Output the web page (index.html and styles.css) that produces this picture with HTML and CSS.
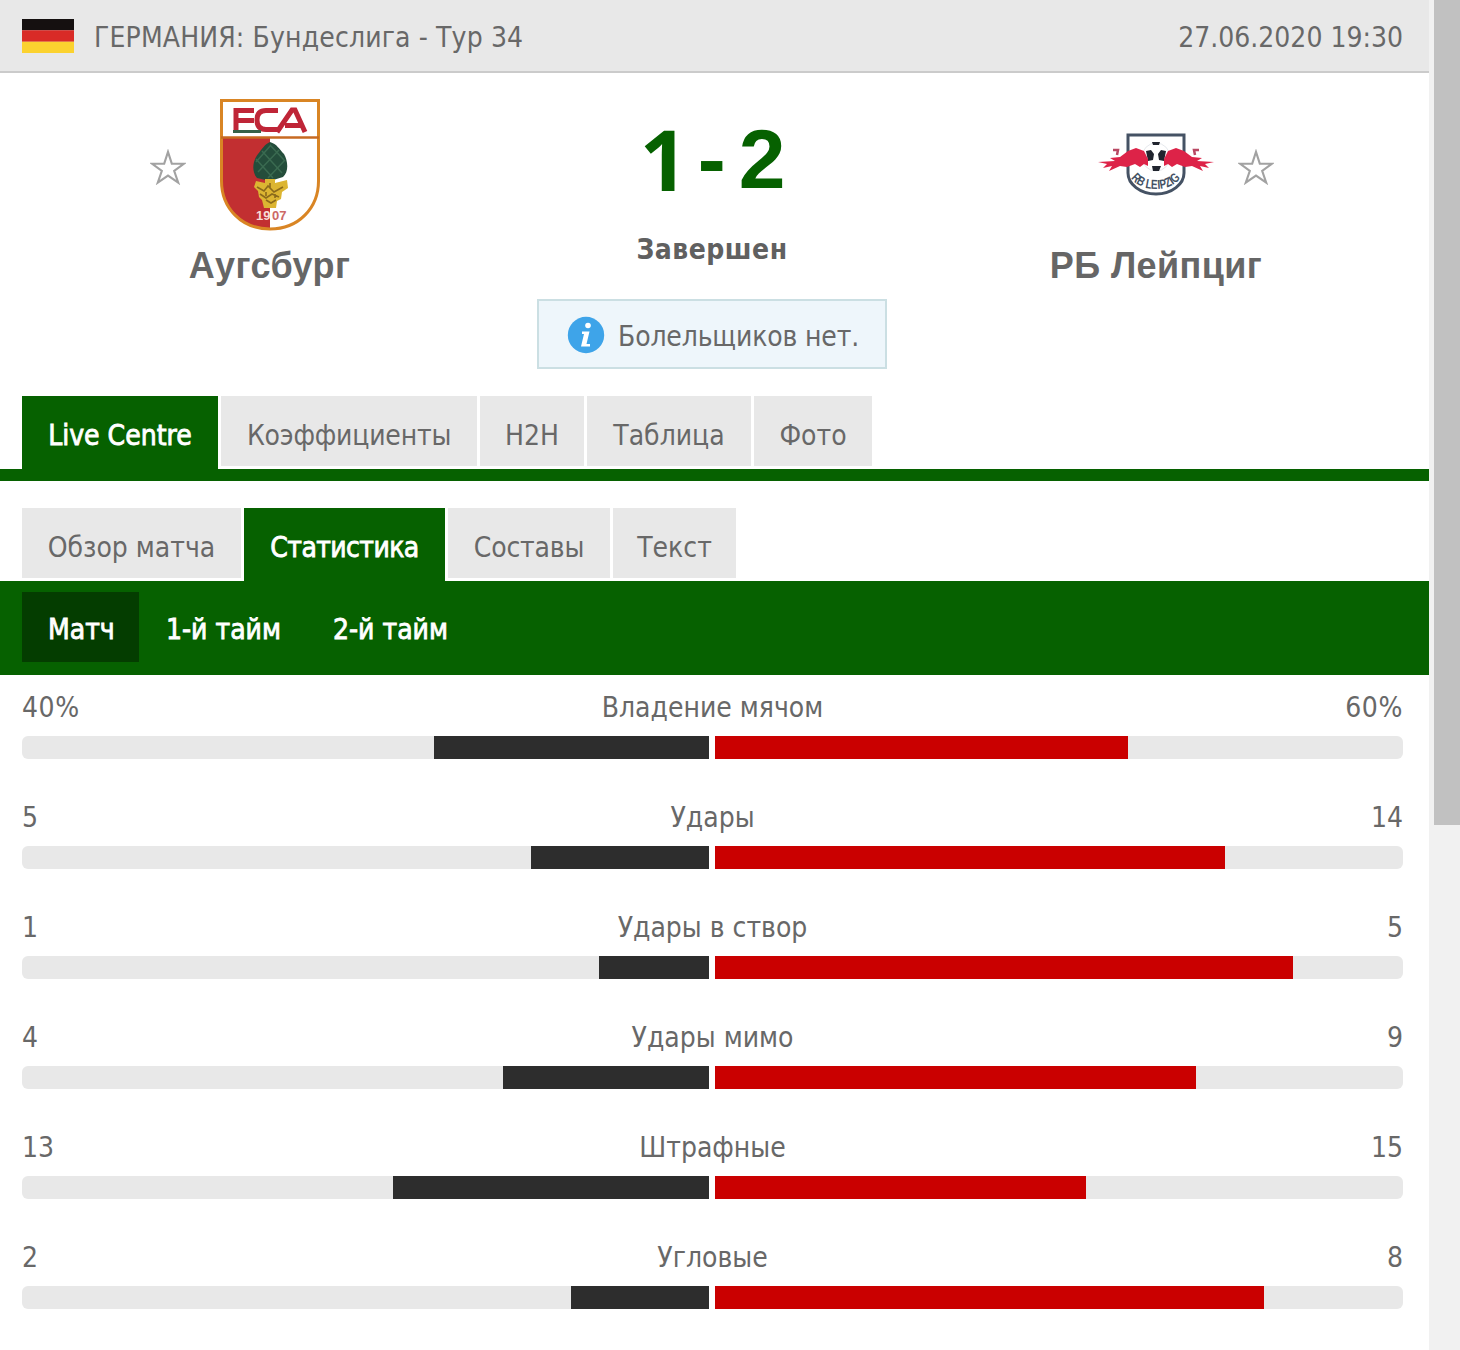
FILE: index.html
```html
<!DOCTYPE html>
<html lang="ru">
<head>
<meta charset="utf-8">
<title>Аугсбург - РБ Лейпциг</title>
<link rel="stylesheet" href="styles.css">
</head>
<body>
<div class="window">
<main class="page">
  <header class="top">
    <svg class="flag" viewBox="0 0 52 36" preserveAspectRatio="none"><path fill="#151010" d="M0 0h52v12H0z"/><path fill="#d92b27" d="M0 12h52v12H0z"/><path fill="#fbd22f" d="M0 24h52v12H0z"/></svg>
    <span class="league">ГЕРМАНИЯ: Бундеслига - Тур 34</span>
    <time class="date">27.06.2020 19:30</time>
  </header>

  <section class="match">
    <div class="team home">
      <div class="crest-row">
        <svg class="star" viewBox="0 0 38 38"><path d="M19 3l4 12.500h13l-10.500 7.600 4.300 12.400L19 28 8.200 35.500l4.300-12.400L2 15.500h13z"/></svg>
        <svg class="fca" viewBox="0 0 100 132">
          <path d="M1.500 1.500h97V82c0 27-20 48-48.500 48S1.500 109 1.500 82z" fill="#fff"/>
          <path d="M2 39h48v91C21 129 2 109 2 82z" fill="#c22f31"/>
          <path d="M1.500 1.500h97V82c0 27-20 48-48.500 48S1.500 109 1.500 82z" fill="none" stroke="#d98524" stroke-width="3"/>
          <path d="M1 38.500h98" stroke="#c76a22" stroke-width="2.500"/>
          <g fill="none" stroke="#bf2537" stroke-width="5"><path d="M34 11.500H16V32M16 21.500h18"/><path d="M58 11.500H46q-9 0-9 9.500t9 9.500h12"/><path d="M57 33l15-22h3l10 22M65 26.500h17"/></g>
          <path d="M13 31h28v3H13z" fill="#356148"/>
          <path d="M50 43c7 2 9 7 14 12 4 7 5 18-1 23l-13 4-13-3c-6-7-4-18 1-24 4-5 7-10 12-12z" fill="#244d3b"/>
          <path d="M42 52l20 22M36 60l17 19M50 46l14 15M59 51L38 73M65 61L48 79M51 46L36 63" stroke="#3a6a50" stroke-width="1.500"/>
          <path d="M45 80h10v4l12-3 1 8-6 4-1 7-4 2-1 7H44l-2-8-3-3-1-6-4-4 2-6 9 2z" fill="#dcb532"/>
          <path d="M37 88l7 4 4-5 6 6 9-5M40 95l6 4 6-4 7 3M46 101l5 3 5-3M50 84v5M46 93v4M55 95v4" stroke="#8b6a1b" stroke-width="1.600" fill="none"/>
          <text x="36" y="121" class="year" fill="#f6dcd7">19</text><text x="52" y="121" class="year" fill="#cc6966">07</text>
        </svg>
      </div>
      <h2 class="name name-home">Аугсбург</h2>
    </div>

    <div class="result">
      <div class="score"><span class="one">1</span><span class="dash">-</span><span>2</span></div>
      <div class="status">Завершен</div>
      <div class="notice">
        <svg class="info" viewBox="0 0 38 38"><circle cx="19" cy="19" r="18.200" fill="#3ea4e9"/><circle cx="21" cy="9.500" r="2.800" fill="#fff"/><path d="M15 15.500h7.500l-3 12.500h3.500v2.500h-9l3-12.500H15z" fill="#fff"/></svg>
        <span class="notice-text">Болельщиков нет.</span>
      </div>
    </div>

    <div class="team away">
      <div class="crest-row">
        <svg class="rbl" viewBox="0 0 120 66">
          <path d="M32 3h56v38c0 11-12 21-28 21S32 52 32 41z" fill="#fff" stroke="#455264" stroke-width="3"/>
          <circle cx="60" cy="25" r="14" fill="#fff" stroke="#e6e9ed"/>
          <path d="M56 10h8l-1 3h-6zM50 19l5-1 3 4-1 6-5 1zM70 19l-5-1-3 4 1 6 5 1zM56 34h9l-2 5h-6z" fill="#20242e"/>
          <path d="M2 30l17-1-5-3 10-1 8-6 8-3 8 3 4 8v7l-4-2-4 3-5-3-8 3-7-1-11 5 3-5-9 2 4-4z" fill="#dd2348"/>
          <path d="M118 30l-17-1 5-3-10-1-8-6-8-3-8 3-4 8v7l4-2 4 3 5-3 8 3 7-1 11 5-3-5 9 2-4-4z" fill="#dd2348"/>
          <path d="M17 18h5l-1 5M103 18h-5l1 5" stroke="#b94863" stroke-width="2.500" fill="none"/>
          <path id="arc" d="M35 46Q43 57 60 57T86 44" fill="none"/>
          <text class="club"><textPath href="#arc" textLength="56" lengthAdjust="spacingAndGlyphs">RB LEIPZIG</textPath></text>
        </svg>
        <svg class="star" viewBox="0 0 38 38"><path d="M19 3l4 12.500h13l-10.500 7.600 4.300 12.400L19 28 8.200 35.500l4.300-12.400L2 15.500h13z"/></svg>
      </div>
      <h2 class="name name-away">РБ Лейпциг</h2>
    </div>
  </section>

  <nav class="tabs main-tabs">
    <a class="tab active w-live">Live Centre</a><a class="tab w-odds">Коэффициенты</a><a class="tab w-h2h">H2H</a><a class="tab w-table">Таблица</a><a class="tab w-photo">Фото</a>
  </nav>
  <nav class="tabs sub-tabs">
    <a class="tab w-review">Обзор матча</a><a class="tab active w-stats">Статистика</a><a class="tab w-squads">Составы</a><a class="tab w-text">Текст</a>
  </nav>
  <nav class="periods">
    <a class="period current">Матч</a><a class="period">1-й тайм</a><a class="period">2-й тайм</a>
  </nav>

  <section class="stats">
    <div class="stat"><div class="values percent"><span>40%</span><span class="label">Владение мячом</span><span>60%</span></div><div class="bars"><div class="half left"><i style="width:40%"></i></div><div class="half right"><i style="width:60%"></i></div></div></div>
    <div class="stat"><div class="values"><span>5</span><span class="label">Удары</span><span>14</span></div><div class="bars"><div class="half left"><i style="width:25.850%"></i></div><div class="half right"><i style="width:74.150%"></i></div></div></div>
    <div class="stat"><div class="values"><span>1</span><span class="label">Удары в створ</span><span>5</span></div><div class="bars"><div class="half left"><i style="width:16%"></i></div><div class="half right"><i style="width:84%"></i></div></div></div>
    <div class="stat"><div class="values"><span>4</span><span class="label">Удары мимо</span><span>9</span></div><div class="bars"><div class="half left"><i style="width:30.050%"></i></div><div class="half right"><i style="width:69.950%"></i></div></div></div>
    <div class="stat"><div class="values"><span>13</span><span class="label">Штрафные</span><span>15</span></div><div class="bars"><div class="half left"><i style="width:46.050%"></i></div><div class="half right"><i style="width:53.950%"></i></div></div></div>
    <div class="stat"><div class="values"><span>2</span><span class="label">Угловые</span><span>8</span></div><div class="bars"><div class="half left"><i style="width:20.150%"></i></div><div class="half right"><i style="width:79.850%"></i></div></div></div>
  </section>
</main>
<div class="scrollbar"><div class="thumb"></div></div>
</div>
</body>
</html>
```
FILE: styles.css
```css
* { box-sizing: border-box; }
body {
  margin: 0;
  background: #fff;
  color: #686868;
  font: 28px/34px "DejaVu Sans Condensed", "DejaVu Sans", sans-serif;
  font-stretch: condensed;
  white-space: nowrap;
}
svg { display: block; flex: none; }
.window { display: flex; height: 1350px; overflow: hidden; }
.page { width: 1429px; flex: none; }
.scrollbar { flex: 1; background: #f1f1f1; padding-left: 5px; }
.thumb { height: 825px; background: #c1c1c1; }

.top {
  height: 73px;
  display: flex;
  align-items: center;
  padding: 4px 26px 0 22px;
  background: #e8e8e8;
  border-bottom: 2px solid #cbcbcb;
}
.flag { width: 52px; height: 34px; margin-top: -4px; }
.league { margin-left: 20px; letter-spacing: 0.14px; }
.date { margin-left: auto; }

.match { display: flex; height: 323px; }
.team { width: 537px; text-align: center; padding-top: 26px; }
.result { width: 350px; text-align: center; }
.crest-row { display: flex; align-items: center; height: 132px; }
.home .crest-row { padding-left: 150px; gap: 34px; }
.away .crest-row { padding-left: 209px; gap: 22px; }
.star { width: 36px; height: 36px; fill: #fff; stroke: #a2a2a2; stroke-width: 2.2; margin-top: 3px; }
.fca { width: 100px; height: 132px; }
.rbl { width: 120px; height: 66px; }
.year { font: 700 13px "Liberation Sans", sans-serif; }
.club { font: 700 13px "Liberation Sans", sans-serif; fill: #455264; }
.name {
  margin: 15px 0 0;
  font: 700 36px/40px "Liberation Sans", Arial, sans-serif;
  letter-spacing: 0.4px;
  color: #666;
}
.name-home { padding-left: 2px; }
.name-away { margin-right: -1px; }
.score {
  display: flex;
  justify-content: center;
  height: 96px;
  margin-top: 38px;
  padding-left: 1px;
  font: 700 84px/96px "Liberation Sans", Arial, sans-serif;
  color: #066100;
}
.one { font-family: "Open Sans", sans-serif; margin-right: 10px; }
.dash { margin-right: 13px; }
.status { margin-top: 26px; font-weight: 700; letter-spacing: 0.5px; color: #606060; }
.notice {
  display: flex;
  align-items: center;
  height: 70px;
  margin-top: 32px;
  padding: 2px 0 0 28px;
  border: 2px solid #cbdfe3;
  background: #eef6fb;
}
.info { width: 38px; height: 38px; margin-right: 13px; }
.notice-text { padding-top: 3px; letter-spacing: -0.15px; }

.tabs { display: flex; gap: 3px; padding-left: 22px; }
.main-tabs { height: 85px; border-bottom: 12px solid #066100; }
.sub-tabs { height: 73px; margin-top: 27px; }
.tab {
  height: 70px;
  padding-top: 23px;
  background: #e8e8e8;
  text-align: center;
}
.active { height: 73px; background: #066100; color: #fff; -webkit-text-stroke: 0.8px #fff; }
.w-live { width: 196px; }
.w-odds { width: 256px; letter-spacing: -0.2px; }
.w-h2h { width: 104px; }
.w-table { width: 164px; }
.w-photo { width: 118px; }
.w-review { width: 219px; }
.w-stats { width: 201px; letter-spacing: -0.6px; }
.w-squads { width: 162px; letter-spacing: -0.2px; }
.w-text { width: 123px; }

.periods {
  display: flex;
  height: 94px;
  padding: 11px 0 0 22px;
  background: #066100;
  color: #fff;
  -webkit-text-stroke: 0.8px #fff;
}
.period { width: 167px; height: 70px; padding: 21px 0 0 27px; }
.current { width: 117px; padding-left: 26px; background: #043d00; }

.stats { padding: 16px 26px 0 22px; }
.stat { height: 110px; }
.values { display: grid; grid-template-columns: 1fr auto 1fr; height: 45px; }
.values > :last-child { text-align: right; }
.percent > :not(.label) { letter-spacing: 0.6px; }
.bars { display: flex; gap: 6px; height: 23px; }
.half { display: flex; background: #e8e8e8; }
.half i { display: block; height: 100%; }
.left { width: 687px; justify-content: flex-end; border-radius: 6px 0 0 6px; }
.left i { background: #2d2d2d; }
.right { flex: 1; border-radius: 0 6px 6px 0; }
.right i { background: #ca0000; }
```
